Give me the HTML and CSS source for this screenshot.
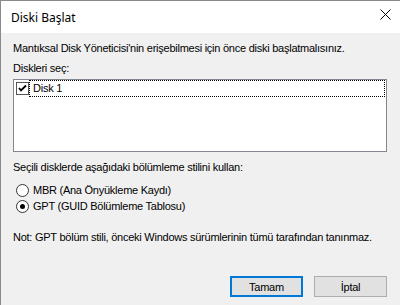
FILE: index.html
```html
<!DOCTYPE html>
<html lang="tr">
<head>
<meta charset="utf-8">
<link rel="stylesheet" href="styles.css">
</head>
<body>
<div class="window">
  <div class="titlebar">
    <span class="title">Diski Başlat</span>
    <svg class="close" width="12" height="12" viewBox="0 0 12 12"><path d="M0.5 0.5 L10.5 10.5 M10.5 0.5 L0.5 10.5" stroke="#000" stroke-width="1" fill="none"/></svg>
  </div>
  <div class="content">
    <p class="line intro">Mantıksal Disk Yöneticisi'nin erişebilmesi için önce diski başlatmalısınız.</p>
    <p class="line label">Diskleri seç:</p>
    <div class="listbox">
      <div class="item">
        <span class="check"><svg width="11" height="11" viewBox="0 0 11 11"><path d="M2 5 L4 7.5 L9 2.5" stroke="#000" stroke-width="1.8" fill="none"/></svg></span>
        <span class="focus">Disk 1</span>
      </div>
    </div>
    <p class="line label2">Seçili disklerde aşağıdaki bölümleme stilini kullan:</p>
    <div class="radios">
      <div class="radio-row"><span class="radio"></span><span>MBR (Ana Önyükleme Kaydı)</span></div>
      <div class="radio-row"><span class="radio on"></span><span>GPT (GUID Bölümleme Tablosu)</span></div>
    </div>
    <p class="line note">Not: GPT bölüm stili, önceki Windows sürümlerinin tümü tarafından tanınmaz.</p>
    <div class="buttons">
      <button class="btn default">Tamam</button>
      <button class="btn">İptal</button>
    </div>
  </div>
</div>
</body>
</html>
```
FILE: styles.css
```css
html, body {
  margin: 0;
  padding: 0;
  background: #f0f0f0;
}
.window {
  width: 399px;
  height: 304px;
  border-top: 1px solid #8a8a8a;
  border-left: 1px solid #8a8a8a;
  background: #f0f0f0;
  display: flex;
  flex-direction: column;
  font-family: "Liberation Sans", Arial, sans-serif;
  font-size: 11px;
  letter-spacing: -0.25px;
  color: #000;
  overflow: hidden;
}
.titlebar {
  height: 32px;
  background: #fff;
  display: flex;
  align-items: center;
  justify-content: space-between;
  padding: 0 8px 0 10px;
  flex: none;
  letter-spacing: 0;
}
.title {
  font-family: "Noto Sans", "Liberation Sans", sans-serif;
  font-size: 12px;
  line-height: 16px;
  margin-top: 1px;
}
.close {
  display: block;
  margin-top: -4px;
}
.content {
  padding: 9px 13px 0 12px;
  display: flex;
  flex-direction: column;
}
.line {
  margin: 0;
  line-height: 13px;
  height: 13px;
  white-space: nowrap;
}
.label { margin-top: 7px; }
.listbox {
  margin-top: 4px;
  height: 71px;
  background: #fff;
  border: 1px solid #828790;
  padding: 0 0 0 2px;
}
.item {
  display: flex;
  align-items: center;
  height: 17px;
}
.check {
  width: 11px;
  height: 11px;
  border: 1px solid #555;
  background: #fff;
  display: flex;
  align-items: center;
  justify-content: center;
  flex: none;
}
.check svg { display: block; }
.focus {
  flex: 1;
  height: 15px;
  line-height: 15px;
  border: 1px dotted #000;
  padding-left: 3px;
  margin-right: 1px;
}
.label2 { margin-top: 9px; }
.radios {
  margin-top: 8px;
  display: flex;
  flex-direction: column;
}
.radio-row {
  height: 16px;
  display: flex;
  align-items: center;
  gap: 4px;
  padding-left: 3px;
  line-height: 13px;
}
.radio {
  width: 11px;
  height: 11px;
  border: 1px solid #333;
  border-radius: 50%;
  background: #fff;
  position: relative;
  flex: none;
}
.radio.on::after {
  content: "";
  position: absolute;
  left: 3px;
  top: 3px;
  width: 5px;
  height: 5px;
  border-radius: 50%;
  background: #000;
}
.note { margin-top: 17px; }
.buttons {
  margin-top: 32px;
  display: flex;
  justify-content: flex-end;
  gap: 11px;
}
.btn {
  width: 73px;
  height: 21px;
  margin: 0;
  padding: 0;
  background: #e1e1e1;
  border: 1px solid #adadad;
  font-family: "Liberation Sans", Arial, sans-serif;
  font-size: 11px;
  letter-spacing: -0.25px;
  color: #000;
}
.btn.default {
  border: 2px solid #0078d7;
}
```
